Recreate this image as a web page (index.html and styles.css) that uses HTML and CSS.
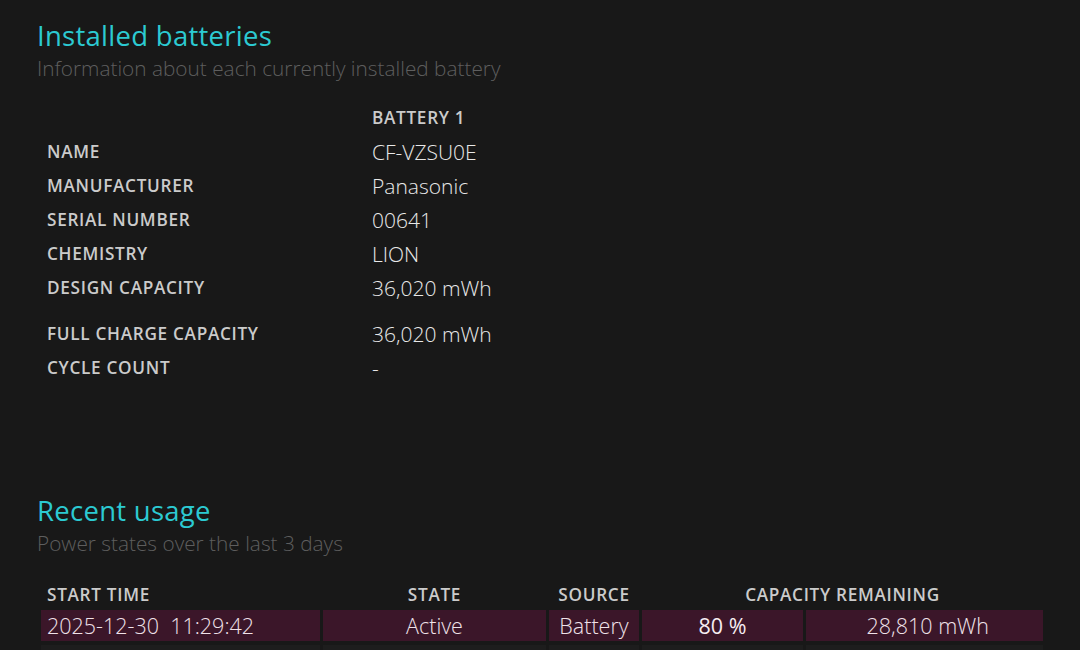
FILE: index.html
```html
<!DOCTYPE html>
<html>
<head>
<meta charset="utf-8">
<link rel="stylesheet" href="styles.css">
</head>
<body>
<h2 class="section-title">Installed batteries</h2>
<p class="explanation">Information about each currently installed battery</p>
<div class="battery-table">
  <div class="label-cell"></div><div class="col-head">Battery 1</div>
  <div class="label-cell">Name</div><div class="value">CF-VZSU0E</div>
  <div class="label-cell">Manufacturer</div><div class="value">Panasonic</div>
  <div class="label-cell">Serial number</div><div class="value">00641</div>
  <div class="label-cell">Chemistry</div><div class="value">LION</div>
  <div class="label-cell">Design capacity</div><div class="value">36,020 mWh</div>
  <div class="label-cell gap-before">Full charge capacity</div><div class="value gap-before">36,020 mWh</div>
  <div class="label-cell">Cycle count</div><div class="value null">-</div>
</div>

<h2 class="section-title usage-title">Recent usage</h2>
<p class="explanation">Power states over the last 3 days</p>
<div class="usage-table">
  <div class="th left">Start time</div>
  <div class="th center">State</div>
  <div class="th center">Source</div>
  <div class="th center span2">Capacity remaining</div>

  <div class="td even left dt">2025-12-30  11:29:42</div>
  <div class="td even center">Active</div>
  <div class="td even center">Battery</div>
  <div class="td even center pct">80 %</div>
  <div class="td even right">28,810 mWh</div>

  <div class="td odd"></div>
  <div class="td odd"></div>
  <div class="td odd"></div>
  <div class="td odd"></div>
  <div class="td odd"></div>
</div>
</body>
</html>
```

FILE: styles.css
```css
html, body {
  margin: 0;
  background: #181818;
}
body {
  padding: 0 0 0 37px;
  font-family: "Open Sans", "Noto Sans", sans-serif;
  color: #e6e6e6;
  overflow: hidden;
  height: 650px;
}
.section-title {
  margin: 20px 0 0;
  font-size: 27.5px;
  line-height: 32px;
  font-weight: 500;
  color: #2ccad2;
  letter-spacing: 0.01em;
}
.explanation {
  margin: 2px 0 0;
  font-size: 20.8px;
  line-height: 28px;
  font-weight: 300;
  color: #5e5e5e;
}
.battery-table {
  margin-top: 19px;
  padding-left: 10px;
  display: grid;
  grid-template-columns: 325px auto;
}
.label-cell, .col-head, .value {
  height: 34px;
  line-height: 34px;
}
.gap-before { margin-top: 12px; }
.label-cell, .col-head, .th {
  font-size: 17.2px;
  font-weight: 600;
  letter-spacing: 0.04em;
  text-transform: uppercase;
  color: #cbcbcb;
}
.value {
  font-size: 21px;
  font-weight: 300;
  color: #e8e8e8;
}
.usage-title {
  margin-top: 110px;
}
.usage-table {
  margin: 24px 0 0 4px;
  display: grid;
  grid-template-columns: 279px 223px 90px 161px 237px;
  column-gap: 3px;
  grid-template-rows: 28px 31px 31px;
  row-gap: 1px;
}
.usage-table .odd { margin-top: 3px; }
.th {
  align-self: center;
  padding: 0 5px;
  line-height: 28px;
}
.span2 { grid-column: span 2; }
.td {
  font-size: 21.5px;
  font-weight: 300;
  line-height: 31px;
  color: #f0e2e9;
  white-space: pre;
}
.td.even { background: #3b1629; }
.td.odd { background: #1d1d1d; }
.left { text-align: left; padding-left: 6px; }
.center { text-align: center; }
.right { text-align: right; padding-right: 54px; }
.pct { font-weight: 400; color: #f6edf2; }
```
